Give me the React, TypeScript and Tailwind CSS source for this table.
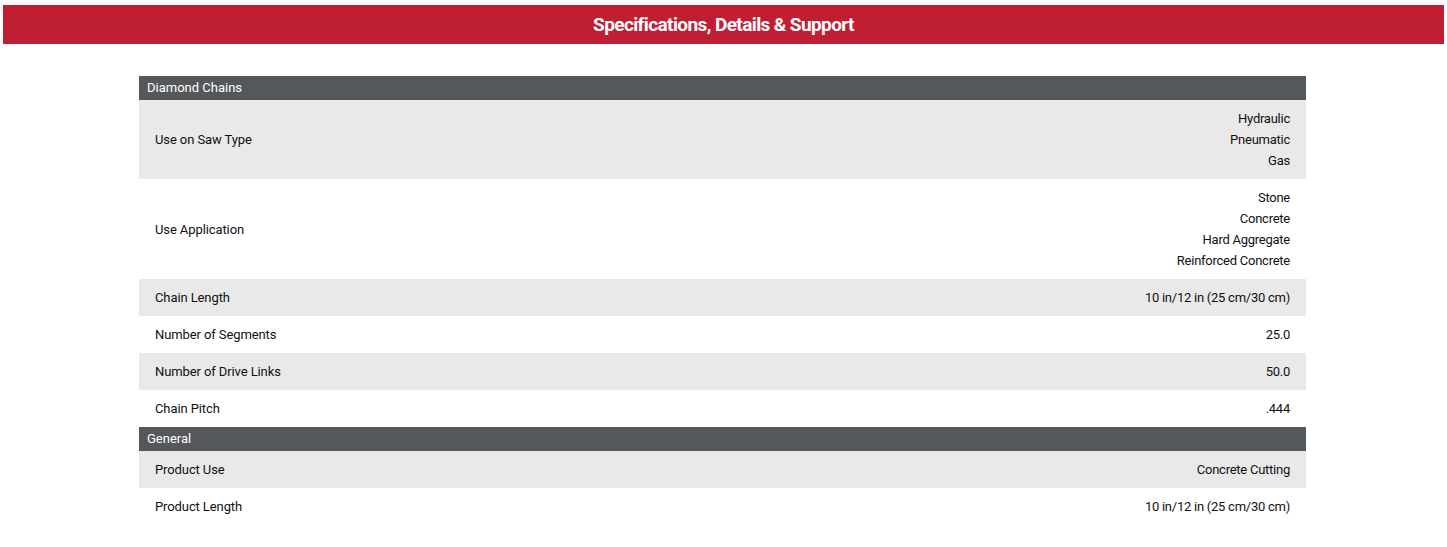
// Specifications table section

type Row = { label: string; values: string[] };
type Group = { title: string; rows: Row[] };

const groups: Group[] = [
  {
    title: 'Diamond Chains',
    rows: [
      { label: 'Use on Saw Type', values: ['Hydraulic', 'Pneumatic', 'Gas'] },
      { label: 'Use Application', values: ['Stone', 'Concrete', 'Hard Aggregate', 'Reinforced Concrete'] },
      { label: 'Chain Length', values: ['10 in/12 in (25 cm/30 cm)'] },
      { label: 'Number of Segments', values: ['25.0'] },
      { label: 'Number of Drive Links', values: ['50.0'] },
      { label: 'Chain Pitch', values: ['.444'] },
    ],
  },
  {
    title: 'General',
    rows: [
      { label: 'Product Use', values: ['Concrete Cutting'] },
      { label: 'Product Length', values: ['10 in/12 in (25 cm/30 cm)'] },
    ],
  },
];

export default function App() {
  return (
    <div className="min-h-[547px] bg-white pt-[5px] px-[3px] font-['Roboto',_sans-serif] text-[#111]">
      {/* Banner */}
      <div className="h-[39px] bg-[#c01f33] flex items-center justify-center">
        <h2 className="text-white text-[19px] font-bold tracking-[-0.6px] pt-[1px]">Specifications, Details &amp; Support</h2>
      </div>

      {/* Spec table */}
      <div className="w-[1167px] ml-[136px] mt-[32px]">
        {groups.map((g) => (
          <div key={g.title}>
            <div className="h-[24px] bg-[#55585a] text-white text-[13px] flex items-center px-2">{g.title}</div>
            {g.rows.map((r, i) => (
              <div
                key={r.label}
                className={`flex items-center justify-between px-4 py-2 text-[13px] leading-[21px] ${i % 2 === 0 ? 'bg-[#e9e9e9]' : 'bg-white'}`}
              >
                <span className="tracking-[-0.1px]">{r.label}</span>
                <div className="flex flex-col items-end tracking-[-0.25px]">
                  {r.values.map((v) => (
                    <span key={v}>{v}</span>
                  ))}
                </div>
              </div>
            ))}
          </div>
        ))}
      </div>
    </div>
  );
}
